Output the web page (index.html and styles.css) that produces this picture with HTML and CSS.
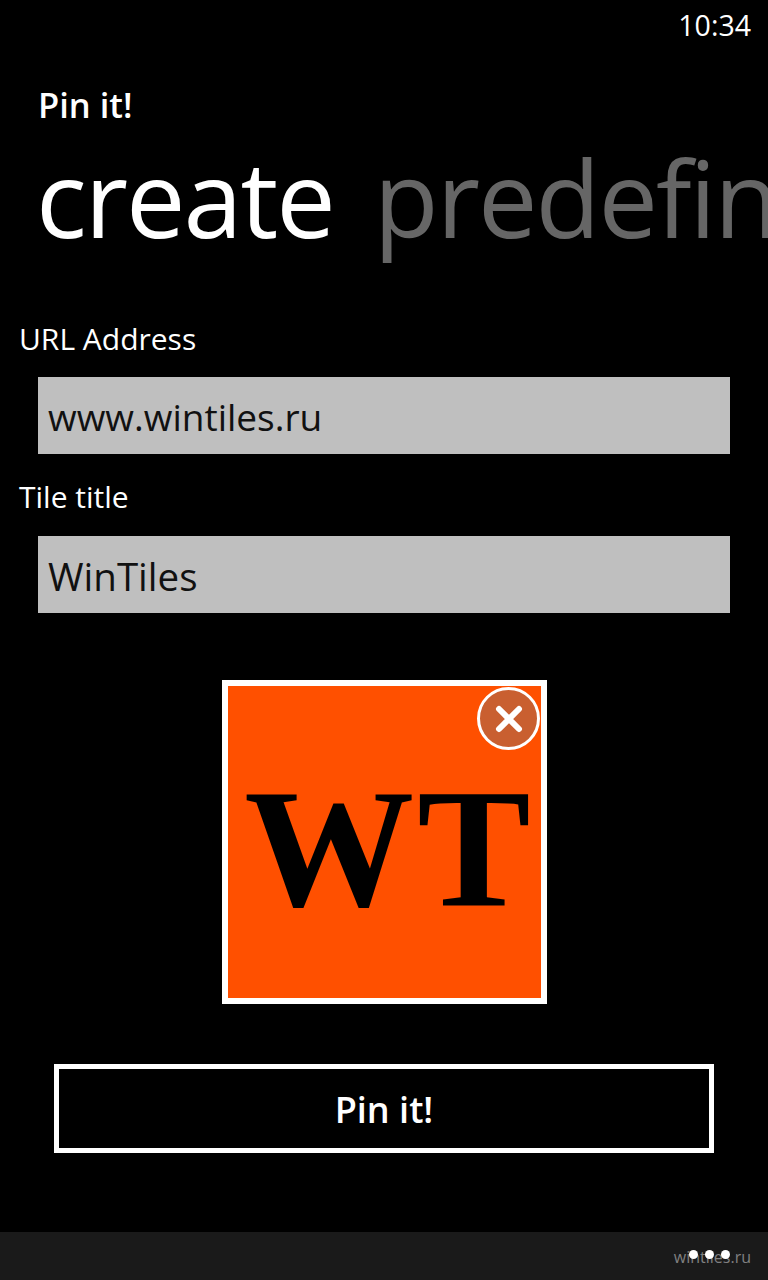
FILE: index.html
```html
<!DOCTYPE html>
<html lang="en">
<head>
  <meta charset="UTF-8">
  <meta name="viewport" content="width=device-width, initial-scale=1.0">
  <title>Pin it!</title>
  <link rel="stylesheet" href="styles.css">
</head>
<body>
  <div class="phone">
    <div class="status-bar">10:34</div>

    <h1 class="app-title">Pin it!</h1>

    <div class="pivot">
      <span class="pivot-item active">create</span>
      <span class="pivot-item">predefined</span>
    </div>

    <label class="field-label">URL Address</label>
    <div class="text-box">www.wintiles.ru</div>

    <label class="field-label second">Tile title</label>
    <div class="text-box title-box">WinTiles</div>

    <div class="tile-wrap">
      <div class="tile">
        <span class="tile-text">WT</span>
        <div class="tile-close">
          <svg width="28" height="28" viewBox="0 0 28 28">
            <path d="M4 4 L24 24 M24 4 L4 24" stroke="#fff" stroke-width="6" stroke-linecap="round" fill="none"/>
          </svg>
        </div>
      </div>
    </div>

    <button class="pin-btn">Pin it!</button>

    <div class="app-bar">
      <span class="watermark">wintiles.ru</span>
      <div class="dots">
        <span class="dot"></span>
        <span class="dot"></span>
        <span class="dot"></span>
      </div>
    </div>
  </div>
</body>
</html>
```

FILE: styles.css
```css
* {
  box-sizing: border-box;
}

body {
  margin: 0;
  background-color: #000;
  color: #fff;
  font-family: "Open Sans", "Noto Sans", sans-serif;
}

.phone {
  position: relative;
  width: 768px;
  height: 1280px;
  overflow: hidden;
  background-color: #000;
}

.status-bar {
  padding: 6px 17px 0 0;
  height: 47px;
  text-align: right;
  font-size: 28.5px;
  line-height: 38px;
}

.app-title {
  margin: 36px 0 0 38px;
  font-size: 34.5px;
  font-weight: 600;
  line-height: 44px;
}

.pivot {
  display: flex;
  gap: 40px;
  height: 140px;
  padding-left: 36px;
  white-space: nowrap;
  font-size: 106px;
  line-height: 140px;
  letter-spacing: -2px;
}

.pivot-item {
  color: #666;
}

.pivot-item.active {
  color: #fff;
}

.field-label {
  display: block;
  margin: 52px 0 0 19px;
  font-size: 30px;
  line-height: 40px;
}

.field-label.second {
  margin-top: 23px;
}

.text-box {
  height: 77px;
  margin: 18px 38px 0;
  padding-left: 10px;
  background-color: #bfbfbf;
  color: #111;
  font-size: 37px;
  line-height: 80px;
}

.title-box {
  margin-top: 19px;
  font-size: 38.5px;
}

.tile-wrap {
  display: flex;
  justify-content: center;
  margin-top: 67px;
}

.tile {
  position: relative;
  width: 325px;
  height: 324px;
  margin-right: -1px;
  border: 6px solid #fff;
  background-color: #ff5000;
  color: #000;
  text-align: center;
}

.tile-text {
  display: block;
  margin-top: 77px;
  padding-left: 9px;
  font-family: "Liberation Serif", serif;
  font-size: 170px;
  font-weight: 700;
  line-height: 170px;
  letter-spacing: 3px;
}

.tile-close {
  position: absolute;
  top: 1px;
  right: 1px;
  display: flex;
  align-items: center;
  justify-content: center;
  width: 63px;
  height: 63px;
  border: 3px solid #fff;
  border-radius: 50%;
  background-color: #c95f30;
}

.pin-btn {
  display: block;
  width: 660px;
  height: 89px;
  margin: 60px 0 0 54px;
  padding-top: 3px;
  border: 5px solid #fff;
  background-color: #000;
  color: #fff;
  font-family: inherit;
  font-size: 36px;
  font-weight: 600;
}

.app-bar {
  position: absolute;
  left: 0;
  right: 0;
  bottom: 0;
  height: 48px;
  background-color: #1a1a1a;
}

.watermark {
  position: absolute;
  top: 11px;
  right: 17px;
  color: #808080;
  font-size: 16px;
  line-height: 28px;
}

.dots {
  position: absolute;
  top: 18px;
  right: 38px;
  display: flex;
  gap: 7px;
}

.dot {
  width: 9px;
  height: 9px;
  border-radius: 50%;
  background-color: #fff;
}
```
